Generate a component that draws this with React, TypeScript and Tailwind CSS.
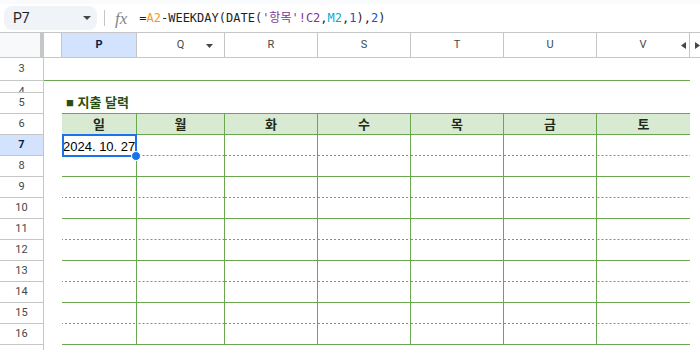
import React from 'react';

const W = ['w-[75px]', 'w-[88px]', 'w-[93px]', 'w-[93px]', 'w-[93px]', 'w-[93px]', 'w-[93px]'];
const DAYS = ['일', '월', '화', '수', '목', '금', '토'];
const LETTERS = ['P', 'Q', 'R', 'S', 'T', 'U', 'V'];
const DASH =
  'bg-[linear-gradient(to_right,#6aa84f_50%,transparent_50%)] bg-[length:4px_1px] bg-repeat-x bg-bottom';

function RowHead({ n, h, active, clip }: { n?: number; h: string; active?: boolean; clip?: boolean }) {
  return (
    <div
      className={`${h} w-[44px] shrink-0 overflow-hidden border-r border-b border-[#c4c7c5] font-['Roboto',sans-serif] text-[11px] ${
        active ? 'bg-[#d3e3fd] font-bold text-[#041e49]' : 'bg-white text-[#444746]'
      }`}
    >
      <div className={`${clip ? 'h-[23px]' : 'h-full'} flex items-center justify-center`}>{n}</div>
    </div>
  );
}

function DataRow({ n, dashed, children }: { n: number; dashed: boolean; children?: React.ReactNode }) {
  return (
    <div className="flex h-[21px]">
      <RowHead n={n} h="h-[21px]" active={n === 7} />
      <div className="w-[18px] shrink-0" />
      {W.map((w, i) => (
        <div
          key={i}
          className={`${w} shrink-0 border-[#6aa84f] ${i < 6 ? 'border-r' : ''} ${dashed ? DASH : 'border-b'} ${
            i === 0 && n === 7 ? 'relative z-10' : ''
          }`}
        >
          {i === 0 && children}
        </div>
      ))}
    </div>
  );
}

export default function App() {
  const rows = [7, 8, 9, 10, 11, 12, 13, 14, 15, 16];
  return (
    <div className="w-[700px] h-[350px] overflow-hidden bg-white font-['Liberation_Sans','Noto_Sans_CJK_KR',sans-serif] text-[#1f1f1f]">
      <div className="h-[4px] bg-[#f9fbfd]" />
      {/* formula bar */}
      <div className="h-[29px] flex items-center border-b border-[#c4c7c5]">
        <div className="ml-[4px] w-[93px] h-[24px] rounded-[8px] bg-[#f0f4f9] flex items-center justify-between pl-[9px] pr-[6px]">
          <span className="font-['Roboto',sans-serif] text-[14px] text-[#1f1f1f]">P7</span>
          <svg width="8" height="4" viewBox="0 0 8 4">
            <path d="M0 0h8L4 4z" fill="#444746" />
          </svg>
        </div>
        <div className="ml-[7px] w-px h-[16px] bg-[#c4c7c5]" />
        <span className="ml-[10px] font-['Liberation_Serif',serif] italic text-[17px] text-[#80868b] leading-none">fx</span>
        <div className="ml-[12px] font-['DejaVu_Sans_Mono','Noto_Sans_CJK_KR',monospace] text-[12px] whitespace-nowrap text-[#1f1f1f]">
          <span>=</span>
          <span className="text-[#f7981d]">A2</span>
          <span>-WEEKDAY(DATE(</span>
          <span className="text-[#7e3794]">'항목'!C2</span>
          <span>,</span>
          <span className="text-[#11a9cc]">M2</span>
          <span>,</span>
          <span className="text-[#1155cc]">1</span>
          <span>),</span>
          <span className="text-[#1155cc]">2</span>
          <span>)</span>
        </div>
      </div>

      {/* column headers */}
      <div className="relative flex h-[25px] font-['Roboto',sans-serif] text-[11px] text-[#444746]">
        <div className="w-[44px] shrink-0 bg-[#f8f9fa] border-r-4 border-b border-[#c4c7c5]" />
        <div className="w-[18px] shrink-0 border-r border-b border-[#c4c7c5]" />
        {LETTERS.map((l, i) => (
          <div
            key={l}
            className={`${W[i]} shrink-0 relative flex items-center justify-center border-r border-b border-[#c4c7c5] ${
              i === 0 ? 'bg-[#d3e3fd] font-bold text-[#041e49]' : 'bg-white'
            }`}
          >
            {l}
            {l === 'Q' && (
              <svg className="absolute right-[11px] top-[11px]" width="7" height="4" viewBox="0 0 7 4">
                <path d="M0 0h7L3.5 4z" fill="#444746" />
              </svg>
            )}
          </div>
        ))}
        <div className="flex-1 border-b border-[#c4c7c5]" />
        <svg className="absolute left-[681px] top-[9px]" width="5" height="7" viewBox="0 0 5 7">
          <path d="M5 0v7L0 3.5z" fill="#444746" />
        </svg>
        <svg className="absolute left-[695px] top-[9px]" width="5" height="7" viewBox="0 0 5 7">
          <path d="M0 0v7l5-3.5z" fill="#444746" />
        </svg>
      </div>

      {/* row 3 */}
      <div className="flex h-[23px]">
        <RowHead n={3} h="h-[23px]" />
        <div className="w-[646px] shrink-0 border-b border-[#6aa84f]" />
      </div>
      {/* row 4 */}
      <div className="flex h-[12px]">
        <RowHead n={4} h="h-[12px]" clip />
      </div>
      {/* row 5 title */}
      <div className="flex h-[21px]">
        <RowHead n={5} h="h-[21px]" />
        <div className="w-[18px] shrink-0" />
        <div className="w-[628px] shrink-0 border-b border-[#6aa84f] flex items-end pl-[4px] pb-[3px] font-bold text-[13px] leading-[15px] text-[#274e13] whitespace-nowrap">
          ■ 지출 달력
        </div>
      </div>
      {/* row 6 header */}
      <div className="flex h-[21px]">
        <RowHead n={6} h="h-[21px]" />
        <div className="w-[18px] shrink-0" />
        {DAYS.map((d, i) => (
          <div
            key={d}
            className={`${W[i]} shrink-0 bg-[#d9ead3] border-b border-[#6aa84f] ${
              i < 6 ? 'border-r' : ''
            } flex items-end justify-center pb-[1px] font-bold text-[13px] leading-[17px] text-[#1f2a17]`}
          >
            {d}
          </div>
        ))}
      </div>
      {rows.map((n) => (
        <DataRow key={n} n={n} dashed={n % 2 === 1}>
          {n === 7 && (
            <>
              <div className="h-full flex items-end pl-[1px] pb-[2px] text-[13px] leading-[15px] text-black whitespace-nowrap">
                2024. 10. 27
              </div>
              <div className="absolute -top-px -bottom-px left-0 -right-px border-2 border-[#1a73e8]" />
              <div className="absolute -right-[5px] -bottom-[5px] w-[10px] h-[10px] rounded-full bg-[#1a73e8] border border-white" />
            </>
          )}
        </DataRow>
      ))}
      <div className="flex h-[21px]">
        <RowHead h="h-[21px]" />
      </div>
    </div>
  );
}
